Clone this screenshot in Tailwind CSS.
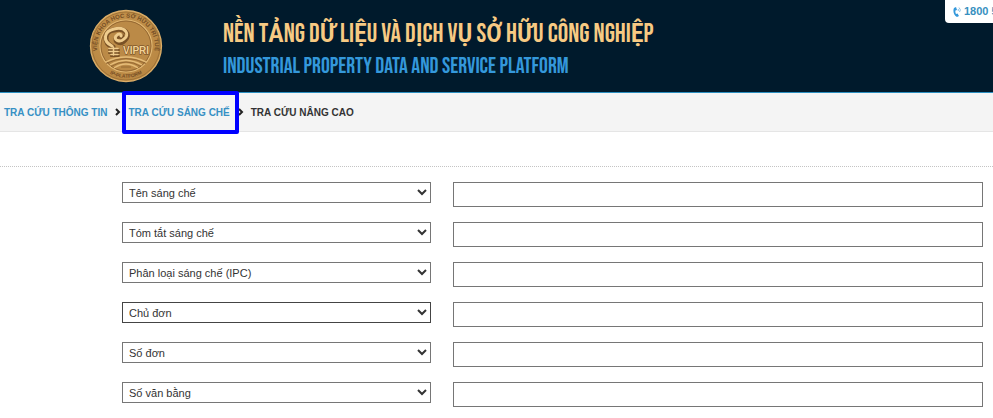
<!DOCTYPE html>
<html lang="vi">
<head>
<meta charset="utf-8">
<meta name="viewport" content="width=device-width, initial-scale=1">
<title>Tra cứu nâng cao</title>
<script src="https://cdn.jsdelivr.net/npm/@tailwindcss/browser@4"></script>
</head>
<body class="bg-white font-['Liberation_Sans',Arial,sans-serif] text-[11px] text-[#333] overflow-x-hidden">
<header class="relative flex items-center gap-[60px] bg-[#001a2c] border-b border-[#2b8fc0] pl-[89px] h-[93px]">
  <svg class="size-[74px] shrink-0" viewBox="0 0 74 74" role="img" aria-label="VIPRI">
    <defs>
      <radialGradient id="gold" cx="45%" cy="40%" r="60%"><stop offset="0" stop-color="#c79750"/><stop offset="1" stop-color="#b98743"/></radialGradient>
      <path id="top" d="M8.500 43A29 29 0 1 1 65.500 43"/>
      <path id="low" d="M13 58A32 32 0 0 0 61 58"/>
    </defs>
    <circle cx="37" cy="37" r="35.500" fill="url(#gold)" stroke="#dcae68" stroke-width="1.300"/>
    <circle cx="37" cy="37" r="34" fill="none" stroke="#8d632d" stroke-width=".6"/>
    <circle cx="37" cy="37" r="26" fill="#bb8a47" stroke="#e3b974" stroke-width="1.200"/>
    <circle cx="37" cy="37" r="25" fill="none" stroke="#84592a" stroke-width=".7"/>
    <g font-family="Liberation Sans, sans-serif" font-weight="bold" fill="#754d24">
      <text font-size="6"><textPath href="#top" startOffset="50%" text-anchor="middle">VIỆN KHOA HỌC SỞ HỮU TRÍ TUỆ</textPath></text>
      <text font-size="5"><textPath href="#low" startOffset="50%" text-anchor="middle">IP-PLATFORM</textPath></text>
    </g>
    <g fill="none" stroke="#795125" stroke-linecap="round">
      <path d="M24 38C14 34 15 22 25 21C36 18 42 26 36 31C32 36 24 33 28 28C31 25 34 27 33 29" stroke-width="5"/>
      <path d="M20 41h10M20 44h10M22 47h8" stroke-width="2"/>
    </g>
    <g fill="none" stroke="#efcc8d" stroke-linecap="round">
      <path d="M23 37C13 32 15 22 25 20C37 17 41 26 35 30C31 34 24 31 27 27C30 24 33 25 32 27" stroke-width="3"/>
      <path d="M20 39.500h9M20 42.500h9M22 45.500h7" stroke-width="1.500"/>
      <path d="M24.500 38v8" stroke-width="1.500"/>
    </g>
    <g fill="none" stroke="#e6bd79" stroke-width="1.300">
      <path d="M17 53Q37 43 57 53"/><path d="M21 56Q37 47 53 56"/><path d="M25 59Q37 51 49 59"/>
    </g>
    <g fill="none" stroke="#8a602d" stroke-width=".8">
      <path d="M17 54.500Q37 44.500 57 54.500"/><path d="M22 57.500Q37 48.500 52 57.500"/><path d="M32 58h10"/>
    </g>
    <text x="34" y="45" font-family="Liberation Sans, sans-serif" font-size="10" font-weight="bold" fill="#f3d296" stroke="#68431d" stroke-width="1" paint-order="stroke">VIPRI</text>
  </svg>
  <div class="font-['Bebas_Neue','Roboto_Condensed','Liberation_Sans',sans-serif] whitespace-nowrap pt-2">
    <h1 class="text-[26px] leading-[34px] font-[590] text-[#f7ca83]">NỀN TẢNG DỮ LIỆU VÀ DỊCH VỤ SỞ HỮU CÔNG NGHIỆP</h1>
    <p class="text-[22px] leading-[30px] text-[#3498db]">INDUSTRIAL PROPERTY DATA AND SERVICE PLATFORM</p>
  </div>
  <a href="tel:1800" class="absolute top-0 right-0 w-12 h-[23px] flex items-center gap-[3px] pl-2 overflow-hidden whitespace-nowrap rounded-bl-[4px] bg-white font-bold text-[#3790c0]">
    <svg class="w-2 h-3 shrink-0" viewBox="0 0 8 12" fill="none" aria-hidden="true"><path d="M3 1L1 2C-.5 5 1 10 4 11L6 10L4.500 7.500L3 8Q2 6 2.500 4.500L4 4Z" fill="#3498db"/><path d="M5 3Q6 4 5 5M6 1.500Q8.500 4 6.500 6" stroke="#8cc2e4"/></svg>
    <span>1800 5</span>
  </a>
</header>
<nav aria-label="Breadcrumb" class="flex items-center h-[39px] pl-1 bg-[#f4f4f4] border-b border-[#e5e5e5] text-[10px] font-bold whitespace-nowrap">
  <a href="#" class="text-[#3790c4]">TRA CỨU THÔNG TIN</a>
  <svg class="w-[6px] h-2 ml-2 mr-[7px] shrink-0" viewBox="0 0 6 8" fill="none" stroke="#222" stroke-width="2" aria-hidden="true"><path d="M1 1l3 3-3 3"/></svg>
  <a href="#" class="relative text-[#3790c4]">TRA CỨU SÁNG CHẾ<span class="absolute -left-[6px] -right-[9px] -inset-y-[14px] border-4 border-[#0000ff] rounded-[2px]"></span></a>
  <svg class="w-[6px] h-2 ml-2 mr-[7px] shrink-0" viewBox="0 0 6 8" fill="none" stroke="#222" stroke-width="2" aria-hidden="true"><path d="M1 1l3 3-3 3"/></svg>
  <span aria-current="page">TRA CỨU NÂNG CAO</span>
</nav>
<main>
  <div class="h-[35px] border-b border-dotted border-[#c4c4c4]"></div>
  <form class="flex flex-col gap-[15px] pt-[15px] pl-[122px] pr-[10px]">
    <div class="flex items-start gap-[22px]">
      <select aria-label="Tiêu chí 1" class="w-[309px] h-[21px] shrink-0 bg-white border border-[#767676] px-[2px]"><option>Tên sáng chế</option></select>
      <input aria-label="Giá trị 1" type="text" class="flex-1 min-w-0 h-[25px] border border-[#767676] px-2">
    </div>
    <div class="flex items-start gap-[22px]">
      <select aria-label="Tiêu chí 2" class="w-[309px] h-[21px] shrink-0 bg-white border border-[#767676] px-[2px]"><option>Tóm tắt sáng chế</option></select>
      <input aria-label="Giá trị 2" type="text" class="flex-1 min-w-0 h-[25px] border border-[#767676] px-2">
    </div>
    <div class="flex items-start gap-[22px]">
      <select aria-label="Tiêu chí 3" class="w-[309px] h-[21px] shrink-0 bg-white border border-[#767676] px-[2px]"><option>Phân loại sáng chế (IPC)</option></select>
      <input aria-label="Giá trị 3" type="text" class="flex-1 min-w-0 h-[25px] border border-[#767676] px-2">
    </div>
    <div class="flex items-start gap-[22px]">
      <select aria-label="Tiêu chí 4" class="w-[309px] h-[21px] shrink-0 bg-white border border-[#444] px-[2px]"><option>Chủ đơn</option></select>
      <input aria-label="Giá trị 4" type="text" class="flex-1 min-w-0 h-[25px] border border-[#767676] px-2">
    </div>
    <div class="flex items-start gap-[22px]">
      <select aria-label="Tiêu chí 5" class="w-[309px] h-[21px] shrink-0 bg-white border border-[#767676] px-[2px]"><option>Số đơn</option></select>
      <input aria-label="Giá trị 5" type="text" class="flex-1 min-w-0 h-[25px] border border-[#767676] px-2">
    </div>
    <div class="flex items-start gap-[22px]">
      <select aria-label="Tiêu chí 6" class="w-[309px] h-[21px] shrink-0 bg-white border border-[#767676] px-[2px]"><option>Số văn bằng</option></select>
      <input aria-label="Giá trị 6" type="text" class="flex-1 min-w-0 h-[25px] border border-[#767676] px-2">
    </div>
  </form>
</main>
</body>
</html>
